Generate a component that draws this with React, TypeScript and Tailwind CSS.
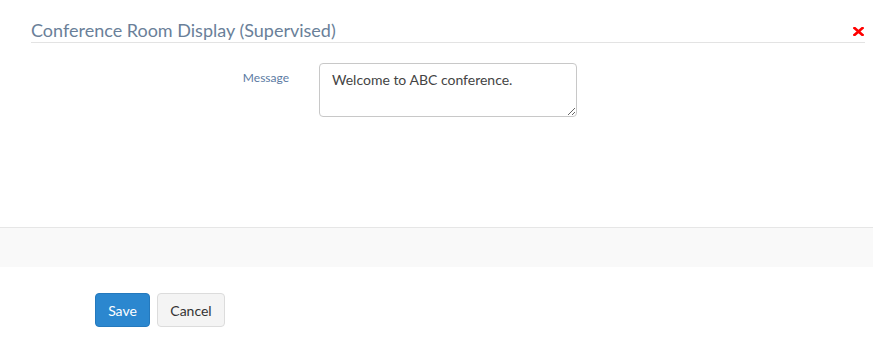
import React from "react";

export default function App() {
  return (
    <div className="w-[873px] h-[342px] bg-white overflow-hidden" style={{ fontFamily: "Lato, 'Open Sans', sans-serif" }}>
      <div className="pl-[31px] pr-[8px] pt-[17px]">
        <div className="flex items-center justify-between border-b border-[#e3e3e3] h-[26px]">
          <span className="text-[18px] leading-[22px] text-[#6a7f99]">Conference Room Display (Supervised)</span>
          <svg width="11" height="9" viewBox="0 0 11 9" className="mr-[1px] mt-[3px]">
            <path d="M1.5 1 L9.5 8 M9.5 1 L1.5 8" stroke="#ff0000" strokeWidth="2.6" strokeLinecap="square" />
          </svg>
        </div>
      </div>
      <div className="flex pt-[20px]">
        <div className="w-[289px] text-right pt-[8px] text-[12px] leading-[14px] text-[#5b7aa3]">Message</div>
        <div className="pl-[30px]">
          <textarea
            defaultValue="Welcome to ABC conference."
            className="block w-[258px] h-[54px] border border-[#c8c8c8] rounded-[4px] px-[12px] py-[6px] text-[14px] leading-[20px] text-[#444] resize-y outline-none"
            style={{ fontFamily: "Lato, sans-serif" }}
          />
        </div>
      </div>
      <div className="mt-[110px] border-t border-[#e6e6e6] h-[40px] bg-[#f9f9f9]" />
      <div className="flex gap-[7px] pl-[95px] pt-[26px]">
        <button className="h-[34px] w-[55px] rounded-[4px] bg-[#2b87cf] border border-[#2479bd] text-white text-[14px]">Save</button>
        <button className="h-[34px] w-[68px] rounded-[4px] bg-[#f4f4f4] border border-[#dcdcdc] text-[#333] text-[14px]">Cancel</button>
      </div>
    </div>
  );
}
